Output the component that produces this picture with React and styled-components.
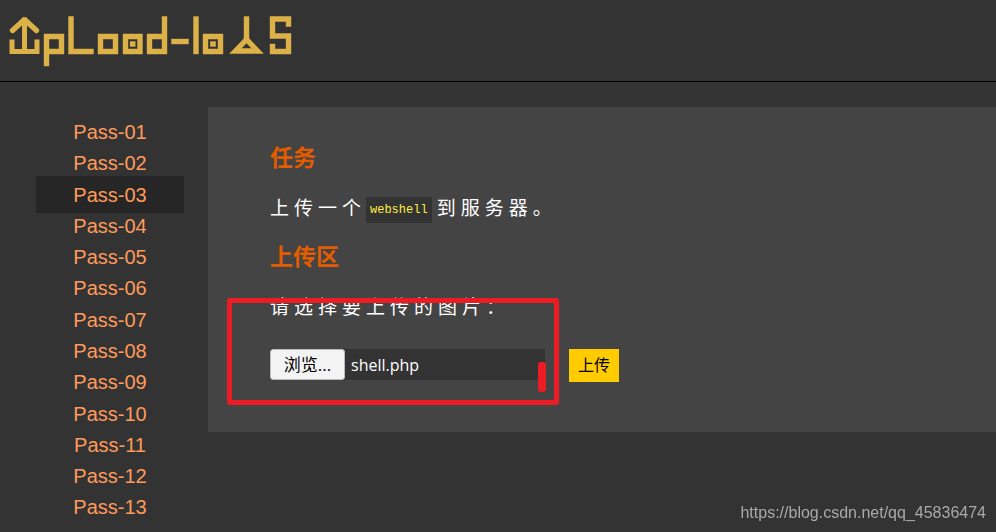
import React, { useRef, useState } from "react";
import styled, { createGlobalStyle } from "styled-components";

const GlobalStyle = createGlobalStyle`
  * {
    box-sizing: border-box;
  }
  html,
  body {
    margin: 0;
    height: 100%;
    overflow: hidden;
  }
  body {
    background: #333333;
    color: #ffffff;
    font-family: "Liberation Sans", "Noto Sans CJK SC", sans-serif;
  }
`;

const Page = styled.div`
  min-height: 100vh;
`;

const Header = styled.header`
  height: 82px;
  border-bottom: 1px solid #000000;
`;

const Logo = styled.svg`
  display: block;
  width: 300px;
  height: 72px;
  fill: none;
  stroke: #dbb148;
  stroke-width: 5.4;
  stroke-linecap: square;
  stroke-linejoin: miter;
`;

const Body = styled.div`
  display: flex;
  align-items: flex-start;
  padding-top: 25px;
`;

const Sidebar = styled.nav`
  flex: none;
  width: 208px;
  padding: 10px 24px 0 36px;
`;

const PassList = styled.ul`
  display: grid;
  grid-auto-rows: 1fr;
  height: 438px;
  margin: 0;
  padding: 0;
  list-style: none;
`;

const PassLink = styled.a`
  display: block;
  margin: -4px 0 -2px;
  padding: 4px 0 2px;
  background: ${(props) => (props.$active ? "#262626" : "transparent")};
  color: #ff9a5a;
  font-size: 20px;
  line-height: 31px;
  text-align: center;
  text-decoration: none;
`;

const Panel = styled.main`
  flex: 1;
  min-width: 0;
  padding: 33px 62px 50px;
  background: #444444;
`;

const Title = styled.h3`
  margin: 0 0 19px;
  color: #e35c00;
  font-family: "Noto Sans CJK SC", sans-serif;
  font-size: 23px;
  font-weight: bold;
  line-height: 32px;
`;

const Text = styled.p`
  margin: 0 0 16px;
  font-family: "Noto Sans CJK SC", sans-serif;
  font-size: 19px;
  letter-spacing: 5px;
  line-height: 32px;
`;

const Code = styled.code`
  display: inline-block;
  margin-right: 5px;
  padding: 0 4px;
  background: #333333;
  color: #ffee44;
  font-family: "Liberation Mono", monospace;
  font-size: 12px;
  letter-spacing: normal;
  line-height: 26px;
  vertical-align: middle;
`;

const UploadArea = styled.form`
  position: relative;
`;

const Controls = styled.div`
  display: flex;
  align-items: flex-start;
  gap: 24px;
  padding-top: 11px;
`;

const FileField = styled.div`
  display: flex;
  align-items: center;
  width: 275px;
  height: 31px;
  background: #333333;
  font-family: "Open Sans", "Noto Sans CJK SC", sans-serif;
  font-size: 16px;
`;

const BrowseButton = styled.button`
  width: 75px;
  height: 31px;
  margin-right: 6px;
  padding: 0;
  border: 1px solid #bbbbbb;
  border-radius: 3px;
  background: #f3f3f3;
  color: #000000;
  font: inherit;
  font-size: 17px;
  line-height: 29px;
`;

const SubmitButton = styled.button`
  width: 50px;
  height: 33px;
  padding: 0 0 3px;
  border: 0;
  background: #ffcc00;
  color: #000000;
  font-family: "Noto Sans CJK SC", sans-serif;
  font-size: 16px;
  line-height: 30px;
`;

const Highlight = styled.div`
  position: absolute;
  top: 8px;
  left: -43px;
  width: 332px;
  height: 107px;
  border: 5px solid #ed1c24;
  border-radius: 3px;
  pointer-events: none;
`;

const Mark = styled.div`
  position: absolute;
  right: 8px;
  bottom: 8px;
  width: 8px;
  height: 30px;
  border-radius: 3px;
  background: #ed1c24;
`;

const Watermark = styled.div`
  position: fixed;
  right: 10px;
  bottom: 10px;
  color: #a9a9a9;
  font-size: 16px;
  line-height: 18px;
`;

const passes = Array.from(
  { length: 14 },
  (_, i) => `Pass-${String(i + 1).padStart(2, "0")}`
);

const UploadLogo = () => (
  <Logo viewBox="0 0 300 72" role="img" aria-label="Upload-labs">
    {/* U */}
    <path
      d="M12.5 30.5 L24.5 19.5 L36.5 30.5"
      strokeLinecap="round"
      strokeLinejoin="bevel"
    />
    <path d="M24.5 20 V51" strokeWidth="5" />
    <path d="M12 42 V51.5 H37 V42" strokeWidth="5" />
    {/* p */}
    <path d="M46.5 63.5 V36.5 H61.5 V51.5 H46.5" />
    {/* L */}
    <path d="M71 19 V51.5 H91" />
    {/* o */}
    <path d="M100.5 36.5 H115.5 V51.5 H100.5 Z" />
    {/* a */}
    <path d="M125.5 36.5 H140 V51.5 H125.5 Z" />
    <path d="M132.6 44 h0.2" />
    {/* d */}
    <path d="M164.5 36.5 H149.5 V51.5 H164.5 V19" />
    {/* - */}
    <path d="M174 41.5 H186" />
    {/* l */}
    <path d="M196 19 V51.5" />
    {/* a */}
    <path d="M205.5 36.5 H220.5 V51.5 H205.5 Z" />
    <path d="M212.9 44 h0.2" />
    {/* b */}
    <path d="M246.5 19 V37" />
    <path d="M246.5 39.5 L235.5 51 H257.5 Z" />
    {/* s */}
    <path d="M288.5 24 V19 H272.5 V36 H288.5 V51.5 H272.5 V46.5" />
  </Logo>
);

const FilePicker = () => {
  const input = useRef(null);
  const [name, setName] = useState("shell.php");

  return (
    <FileField>
      <input
        ref={input}
        type="file"
        aria-label="图片"
        hidden
        onChange={(e) => setName(e.target.files[0]?.name || "")}
      />
      <BrowseButton type="button" onClick={() => input.current.click()}>
        浏览...
      </BrowseButton>
      <span>{name}</span>
    </FileField>
  );
};

const App = () => {
  const [active, setActive] = useState("Pass-03");

  return (
    <Page>
      <GlobalStyle />
      <Header>
        <UploadLogo />
      </Header>
      <Body>
        <Sidebar>
          <PassList>
            {passes.map((pass) => (
              <li key={pass}>
                <PassLink
                  href={`#${pass}`}
                  $active={pass === active}
                  onClick={() => setActive(pass)}
                >
                  {pass}
                </PassLink>
              </li>
            ))}
          </PassList>
        </Sidebar>
        <Panel>
          <Title>任务</Title>
          <Text>
            上传一个<Code>webshell</Code>到服务器。
          </Text>
          <Title>上传区</Title>
          <UploadArea onSubmit={(e) => e.preventDefault()}>
            <Text>请选择要上传的图片：</Text>
            <Controls>
              <FilePicker />
              <SubmitButton type="submit">上传</SubmitButton>
            </Controls>
            <Highlight>
              <Mark />
            </Highlight>
          </UploadArea>
        </Panel>
      </Body>
      <Watermark>https://blog.csdn.net/qq_45836474</Watermark>
    </Page>
  );
};

export default App;
